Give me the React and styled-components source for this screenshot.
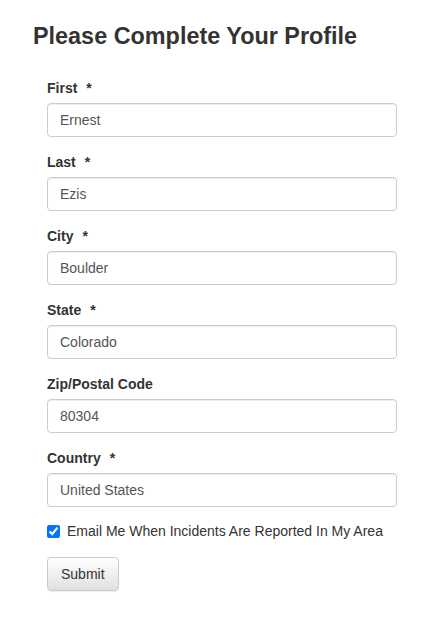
import React from 'react'
import styled, { createGlobalStyle } from 'styled-components'

const GlobalStyle = createGlobalStyle`
  html, body {
    margin: 0;
    padding: 0;
    background: #fff;
  }
  body {
    font-family: "Liberation Sans", Arial, sans-serif;
    font-size: 14px;
    line-height: 1.428571;
    color: #333;
  }
`

const Page = styled.div`
  padding: 20px 33px 30px;
`

const Title = styled.h2`
  margin: 0 0 26px;
  font-size: 23.4px;
  font-weight: bold;
  line-height: 32px;
  color: #333;
`

const Form = styled.form`
  padding: 0 14px;
  width: 350px;
`

const Group = styled.div`
  margin-bottom: 15px;
`

const Label = styled.label`
  display: block;
  margin-bottom: 5px;
  font-weight: bold;
  line-height: 20px;
  span {
    margin-left: 9px;
  }
`

const Input = styled.input`
  display: block;
  box-sizing: border-box;
  width: 100%;
  height: 34px;
  padding: 6px 12px;
  font-family: inherit;
  font-size: 14px;
  color: #555;
  background: #fff;
  border: 1px solid #ccc;
  border-radius: 4px;
  box-shadow: inset 0 1px 1px rgba(0, 0, 0, 0.075);
  outline: none;
`

const CheckRow = styled.label`
  display: flex;
  align-items: center;
  gap: 7px;
  margin: 5px 0 15px;
  font-size: 14px;
  color: #333;
  input {
    margin: 0;
    width: 13px;
    height: 13px;
  }
`

const Button = styled.button`
  height: 34px;
  padding: 6px 13px;
  font-family: inherit;
  font-size: 14px;
  color: #333;
  border: 1px solid #ccc;
  border-radius: 4px;
  background: linear-gradient(to bottom, #fff 0%, #e0e0e0 100%);
  box-shadow: inset 0 1px 0 rgba(255, 255, 255, 0.15), 0 1px 1px rgba(0, 0, 0, 0.075);
  cursor: pointer;
`

const fields = [
  { label: 'First', value: 'Ernest', required: true },
  { label: 'Last', value: 'Ezis', required: true },
  { label: 'City', value: 'Boulder', required: true },
  { label: 'State', value: 'Colorado', required: true },
  { label: 'Zip/Postal Code', value: '80304', required: false },
  { label: 'Country', value: 'United States', required: true },
]

export default function App() {
  return (
    <Page>
      <GlobalStyle />
      <Title>Please Complete Your Profile</Title>
      <Form onSubmit={(e) => e.preventDefault()}>
        {fields.map((f) => (
          <Group key={f.label}>
            <Label>
              {f.label}
              {f.required && <span>*</span>}
            </Label>
            <Input defaultValue={f.value} />
          </Group>
        ))}
        <CheckRow>
          <input type="checkbox" defaultChecked />
          Email Me When Incidents Are Reported In My Area
        </CheckRow>
        <Button type="submit">Submit</Button>
      </Form>
    </Page>
  )
}
